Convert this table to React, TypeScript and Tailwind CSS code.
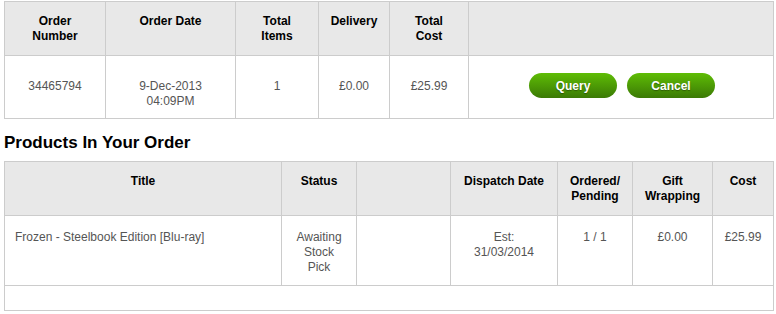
import React from 'react';

const th = "bg-[#e8e8e8] px-[10px] pt-[12px] text-center font-bold text-black leading-[15px]";
const td = "bg-white px-[10px] text-center text-[#555] leading-[15px]";

const GreenButton: React.FC<{ label: string }> = ({ label }) => (
  <button className="h-[25px] w-[88px] rounded-full bg-gradient-to-b from-[#5fbd05] to-[#3b7a05] text-[12px] font-bold text-white [text-shadow:0_1px_1px_rgba(0,0,0,0.35)]">
    {label}
  </button>
);

export default function App() {
  return (
    <div className="bg-white pt-px pl-[4px] text-[12px] font-['Liberation_Sans',Arial,sans-serif]">
      {/* Order summary */}
      <div className="grid w-[770px] grid-cols-[100px_129px_82px_70px_78px_304px] grid-rows-[53px_62px] gap-px border border-[#ccc] bg-[#ccc]">
        <div className={th}>Order<br />Number</div>
        <div className={th}>Order Date</div>
        <div className={th}>Total<br />Items</div>
        <div className={th}>Delivery</div>
        <div className={th}>Total<br />Cost</div>
        <div className={th}></div>

        <div className={`${td} pt-[23px]`}>34465794</div>
        <div className={`${td} pt-[23px]`}>9-Dec-2013<br />04:09PM</div>
        <div className={`${td} pt-[23px]`}>1</div>
        <div className={`${td} pt-[23px]`}>£0.00</div>
        <div className={`${td} pt-[23px]`}>£25.99</div>
        <div className="flex justify-center gap-[10px] bg-white pt-[17px] pl-[2px]">
          <GreenButton label="Query" />
          <GreenButton label="Cancel" />
        </div>
      </div>

      <h2 className="mt-[14px] mb-[8px] text-[17px] font-bold leading-[20px] text-black">Products In Your Order</h2>

      {/* Products */}
      <div className="grid w-[770px] grid-cols-[276px_74px_93px_106px_74px_79px_60px] grid-rows-[53px_69px_24px] gap-px border border-[#ccc] bg-[#ccc]">
        <div className={`${th} pt-[11px]`}>Title</div>
        <div className={`${th} pt-[11px]`}>Status</div>
        <div className={`${th} pt-[11px]`}></div>
        <div className={`${th} pt-[11px]`}>Dispatch Date</div>
        <div className={`${th} pt-[11px]`}>Ordered/<br />Pending</div>
        <div className={`${th} pt-[11px]`}>Gift<br />Wrapping</div>
        <div className={`${th} pt-[11px]`}>Cost</div>

        <div className={`${td} pt-[14px] text-left`}>Frozen - Steelbook Edition [Blu-ray]</div>
        <div className={`${td} pt-[14px] leading-[14.5px]`}>Awaiting<br />Stock<br />Pick</div>
        <div className={td}></div>
        <div className={`${td} pt-[14px] leading-[14.5px]`}>Est:<br />31/03/2014</div>
        <div className={`${td} pt-[14px]`}>1 / 1</div>
        <div className={`${td} pt-[14px]`}>£0.00</div>
        <div className={`${td} pt-[14px]`}>£25.99</div>

        <div className="col-span-7 bg-white"></div>
      </div>
    </div>
  );
}
